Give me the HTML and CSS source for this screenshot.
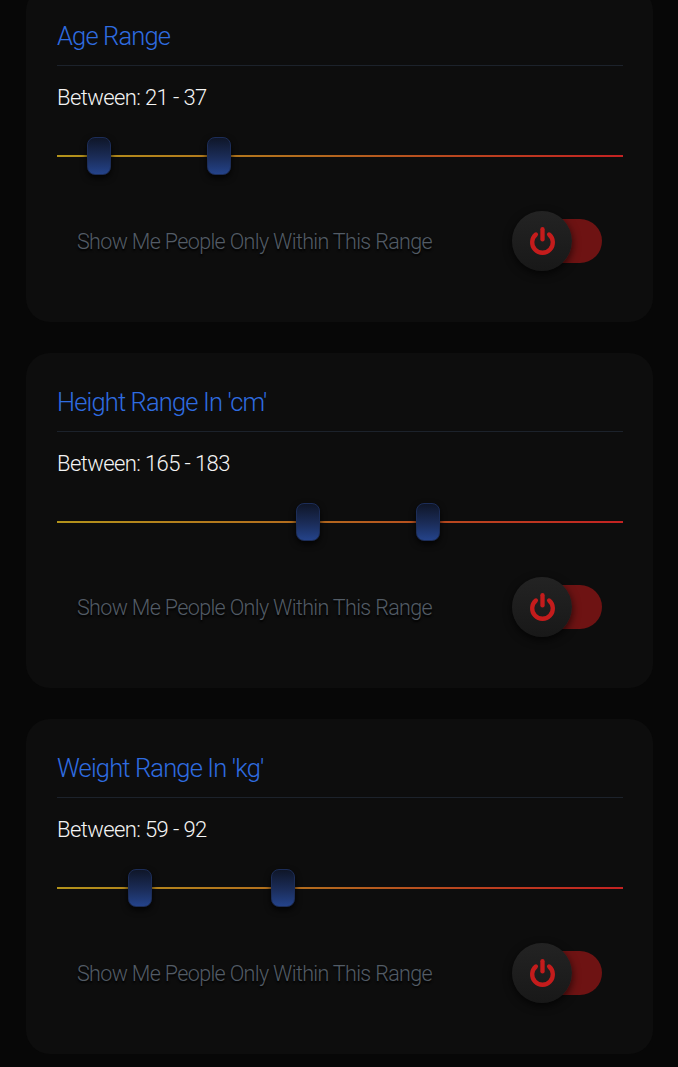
FILE: index.html
```html
<!DOCTYPE html>
<html lang="en">
<head>
<meta charset="utf-8">
<title>Range Filters</title>
<link rel="stylesheet" href="styles.css">
</head>
<body>
<main class="list">
  <section class="card">
    <h2 class="card-title">Age Range</h2>
    <p class="range-value">Between: 21 - 37</p>
    <div class="slider">
      <div class="track"></div>
      <div class="thumb" style="left:30px"></div>
      <div class="thumb" style="left:150px"></div>
    </div>
    <div class="toggle-row">
      <span class="toggle-label">Show Me People Only Within This Range</span>
      <div class="toggle">
        <div class="toggle-track"></div>
        <div class="toggle-knob">
          <svg viewBox="0 0 32 32" width="33" height="33"><path d="M9.6 9.2 A10 10 0 1 0 22.4 9.2" fill="none" stroke="#c41c1c" stroke-width="4.2" stroke-linecap="round"/><line x1="16" y1="4" x2="16" y2="14" stroke="#c41c1c" stroke-width="4.2" stroke-linecap="round"/></svg>
        </div>
      </div>
    </div>
  </section>
  <section class="card">
    <h2 class="card-title">Height Range In 'cm'</h2>
    <p class="range-value">Between: 165 - 183</p>
    <div class="slider">
      <div class="track"></div>
      <div class="thumb" style="left:239px"></div>
      <div class="thumb" style="left:359px"></div>
    </div>
    <div class="toggle-row">
      <span class="toggle-label">Show Me People Only Within This Range</span>
      <div class="toggle">
        <div class="toggle-track"></div>
        <div class="toggle-knob">
          <svg viewBox="0 0 32 32" width="33" height="33"><path d="M9.6 9.2 A10 10 0 1 0 22.4 9.2" fill="none" stroke="#c41c1c" stroke-width="4.2" stroke-linecap="round"/><line x1="16" y1="4" x2="16" y2="14" stroke="#c41c1c" stroke-width="4.2" stroke-linecap="round"/></svg>
        </div>
      </div>
    </div>
  </section>
  <section class="card">
    <h2 class="card-title">Weight Range In 'kg'</h2>
    <p class="range-value">Between: 59 - 92</p>
    <div class="slider">
      <div class="track"></div>
      <div class="thumb" style="left:71px"></div>
      <div class="thumb" style="left:214px"></div>
    </div>
    <div class="toggle-row">
      <span class="toggle-label">Show Me People Only Within This Range</span>
      <div class="toggle">
        <div class="toggle-track"></div>
        <div class="toggle-knob">
          <svg viewBox="0 0 32 32" width="33" height="33"><path d="M9.6 9.2 A10 10 0 1 0 22.4 9.2" fill="none" stroke="#c41c1c" stroke-width="4.2" stroke-linecap="round"/><line x1="16" y1="4" x2="16" y2="14" stroke="#c41c1c" stroke-width="4.2" stroke-linecap="round"/></svg>
        </div>
      </div>
    </div>
  </section>
</main>
</body>
</html>
```
FILE: styles.css
```css
* { box-sizing: border-box; }
html, body { margin: 0; padding: 0; }
body {
  background: #070707;
  font-family: Roboto, "Liberation Sans", sans-serif;
  overflow: hidden;
}
.list {
  display: flex;
  flex-direction: column;
  gap: 31px;
  padding: 0 25px 0 26px;
  margin-top: -13px;
}
.card {
  background: #0d0d0d;
  border-radius: 24px;
  padding: 34px 30px 51px 31px;
  height: 335px;
}
.card-title {
  margin: 0;
  font-weight: 300;
  font-size: 25.5px;
  letter-spacing: -0.85px;
  line-height: 30px;
  color: #2f6ce0;
  padding-bottom: 14px;
  border-bottom: 1px solid #1c222b;
}
.range-value {
  margin: 19px 0 0;
  font-weight: 300;
  font-size: 22px;
  letter-spacing: -0.6px;
  line-height: 26px;
  color: #f4f4f4;
}
.slider {
  position: relative;
  height: 38px;
  margin-top: 26px;
}
.track {
  position: absolute;
  left: 0;
  right: 0;
  top: 18px;
  height: 2px;
  background: linear-gradient(90deg, #b3931b 0%, #b36a1e 45%, #b9471f 70%, #c42222 100%);
}
.thumb {
  position: absolute;
  top: 0;
  width: 24px;
  height: 38px;
  border-radius: 8px;
  background: linear-gradient(180deg, #0f1628 0%, #1b2d5a 55%, #24438a 100%);
  border: 1px solid #1c2d58;
  box-shadow: 0 3px 6px rgba(0,0,0,0.8);
}
.toggle-row {
  display: flex;
  align-items: center;
  justify-content: space-between;
  height: 60px;
  margin-top: 36px;
  padding: 0 21px 0 20px;
}
.toggle-label {
  font-weight: 300;
  font-size: 21.5px;
  letter-spacing: -0.65px;
  color: #535c66;
  text-shadow: 0 2px 2px #000;
}
.toggle {
  position: relative;
  width: 90px;
  height: 60px;
}
.toggle-track {
  position: absolute;
  left: 28px;
  right: 0;
  top: 8px;
  height: 44px;
  border-radius: 22px;
  background: #6e1313;
}
.toggle-knob {
  position: absolute;
  left: 0;
  top: 0;
  width: 60px;
  height: 60px;
  border-radius: 50%;
  background: linear-gradient(180deg, #232323 0%, #181818 100%);
  box-shadow: 0 3px 8px rgba(0,0,0,0.7);
  display: flex;
  align-items: center;
  justify-content: center;
}
.toggle-knob svg { display: block; }
```
